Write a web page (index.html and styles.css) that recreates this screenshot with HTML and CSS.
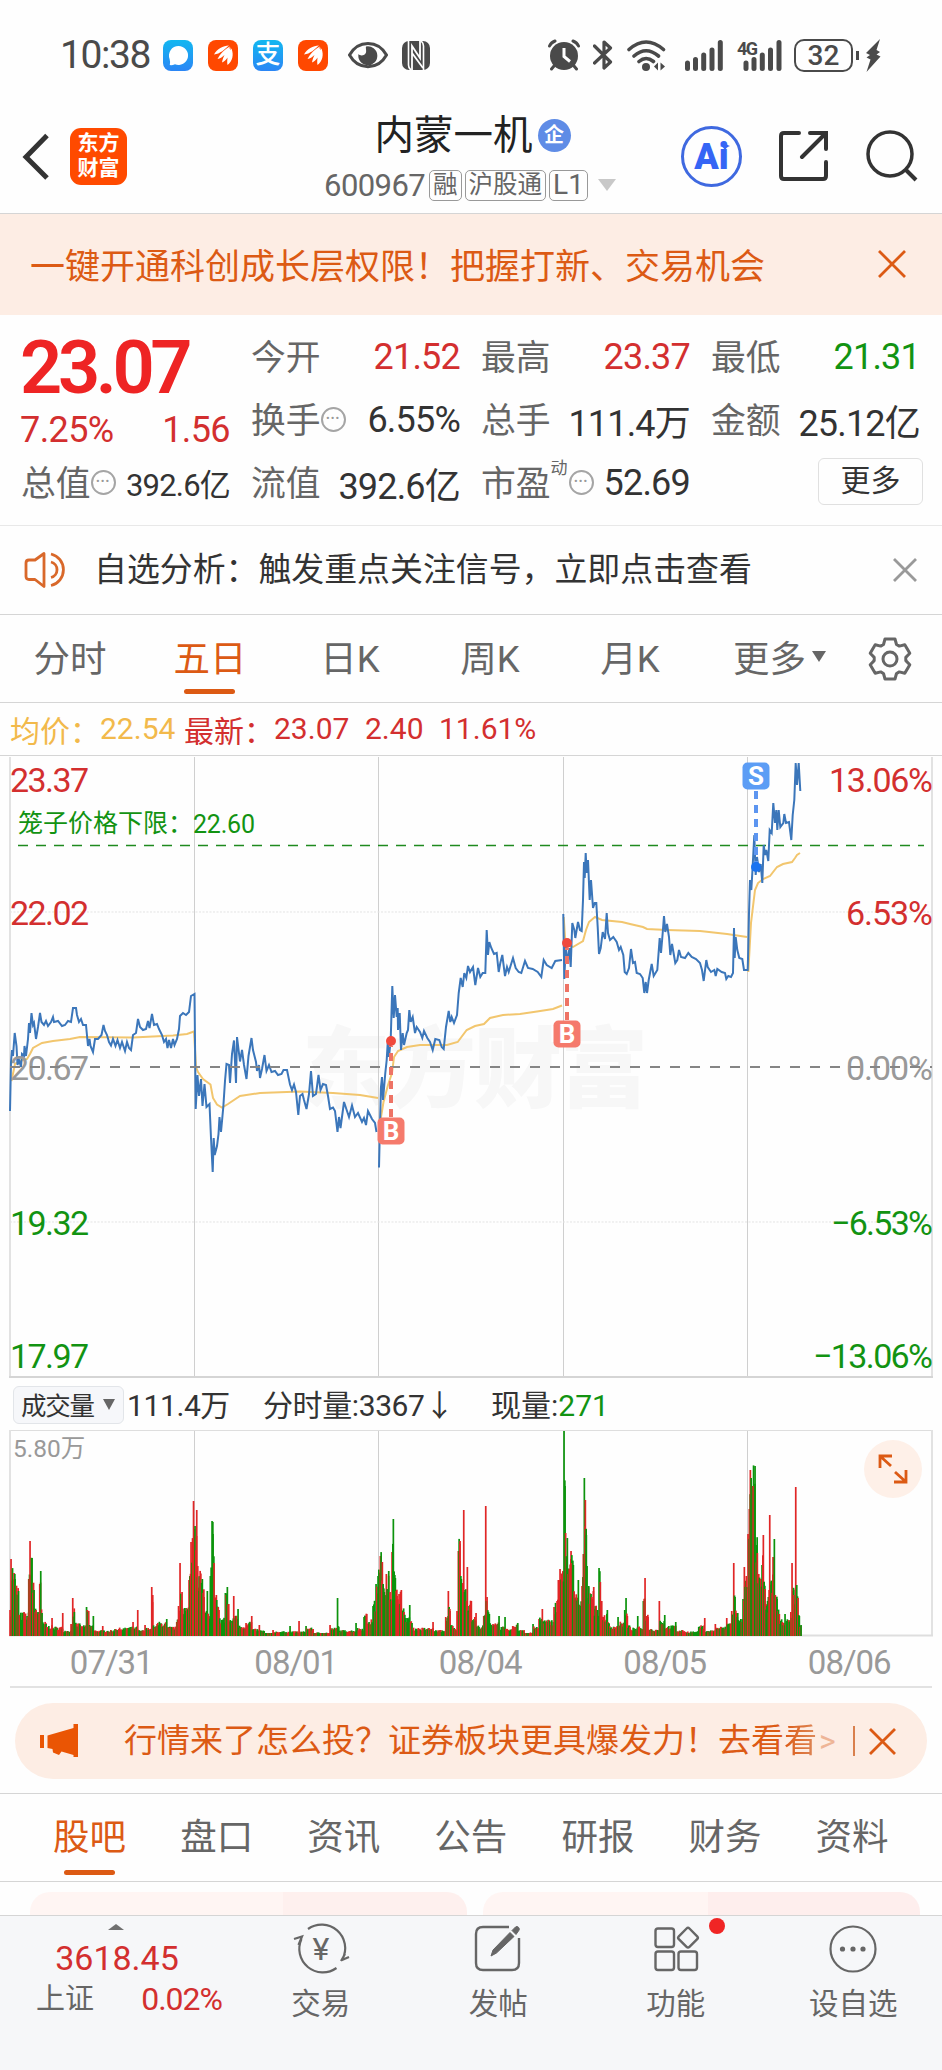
FILE: index.html
```html
<!DOCTYPE html>
<html lang="zh-CN">
<head>
    <meta charset="UTF-8">
    <meta name="viewport" content="width=device-width, initial-scale=1.0">
    <title>内蒙一机 600967</title>
    <link rel="stylesheet" href="styles.css">
</head>
<body>
    <div class="status-bar">
        <span class="time">10:38</span>
        <svg class="app-icon" width="30" height="31" viewBox="0 0 30 31">
            <defs>
                <linearGradient id="blue" x1="0" y1="0" x2="0" y2="1">
                    <stop offset="0" stop-color="#12b7f0"/>
                    <stop offset="1" stop-color="#2b86f5"/>
                </linearGradient>
            </defs>
            <rect width="30" height="31" rx="8" fill="url(#blue)"/>
            <path d="M15.500 6a9.500 9.500 0 1 1-3.500 18.300Q9 25.500 6.800 25Q7.500 22 6.600 19A9.500 9.500 0 0 1 15.500 6z" fill="#fff"/>
        </svg>
        <svg class="app-icon" width="30" height="31" viewBox="0 0 30 31">
            <rect width="30" height="31" rx="8" fill="#ff4800"/>
            <path d="M6 14.500C9 9 15 5.500 21 5.500C17 9 12 14 6 14.500zM9.500 19C12 14 17 9 22 6.500C20 12 15 18 9.500 19zM14 22.500C15 17 18 11 22.500 7.500C22.500 14 19.500 20 14 22.500zM19.500 25C18.500 19 20.500 12 23.500 8.500C26 15 24.500 21 19.500 25z" fill="#fff"/>
        </svg>
        <div class="app-icon pay">支</div>
        <svg class="app-icon" width="30" height="31" viewBox="0 0 30 31">
            <rect width="30" height="31" rx="8" fill="#ff4800"/>
            <path d="M6 14.500C9 9 15 5.500 21 5.500C17 9 12 14 6 14.500zM9.500 19C12 14 17 9 22 6.500C20 12 15 18 9.500 19zM14 22.500C15 17 18 11 22.500 7.500C22.500 14 19.500 20 14 22.500zM19.500 25C18.500 19 20.500 12 23.500 8.500C26 15 24.500 21 19.500 25z" fill="#fff"/>
        </svg>
        <svg class="eye" width="40" height="28" viewBox="0 0 40 28">
            <path d="M1.500 14C10 -1.500 30 -1.500 38.500 14C30 29.500 10 29.500 1.500 14z" fill="none" stroke="#4a4a4a" stroke-width="3"/>
            <path d="M18 5.500A9.500 9.500 0 1 1 10.500 13c2 2.500 6.500 1.500 7.500-1.500c.600-2-.600-4.500 0-6z" fill="#4a4a4a"/>
        </svg>
        <svg class="nfc" width="28" height="29" viewBox="0 0 28 29">
            <rect width="28" height="29" rx="7" fill="#4a4a4a"/>
            <path d="M6.500 0V24Q6.500 27 9 29M21.500 29V5Q21.500 2 19 0" fill="none" stroke="#fff" stroke-width="1.600"/>
            <path d="M10 29V5L18 17V0M10 12L21 27" fill="none" stroke="#fff" stroke-width="1.800"/>
        </svg>
        <svg class="alarm" width="32" height="32" viewBox="0 0 32 32">
            <circle cx="16" cy="17" r="14" fill="#4a4a4a"/>
            <path d="M1.500 7Q3 3.500 7 2M25 2Q29 3.500 30.500 7M6 27L3.500 30M26 27L28.500 30" fill="none" stroke="#4a4a4a" stroke-width="3" stroke-linecap="round"/>
            <path d="M16 9V17.500L22 22.500" fill="none" stroke="#fff" stroke-width="3"/>
        </svg>
        <svg class="bluetooth" width="20" height="32" viewBox="0 0 20 32">
            <path d="M1.500 7L17.500 23L11 29V3L17.500 9L1.500 24" fill="none" stroke="#4a4a4a" stroke-width="3.200" stroke-linecap="round" stroke-linejoin="round"/>
        </svg>
        <svg class="wifi" width="40" height="31" viewBox="0 0 40 31">
            <path d="M2 9.500Q19 -5.500 36.500 9.500M7 16Q19 5.500 31.500 16M12 21.500Q19 15.500 26.500 21.500" fill="none" stroke="#4a4a4a" stroke-width="3.600" stroke-linecap="round"/>
            <circle cx="19" cy="27" r="4" fill="#4a4a4a"/>
            <path d="M27 26.500L31 22.500V30.500zM38 26.500L33.500 22.500V30.500z" fill="#4a4a4a"/>
        </svg>
        <svg class="signal" width="40" height="31" viewBox="0 0 40 31">
            <path d="M2.500 23V28.500M10.500 19.500V28.500M18.700 15V28.500M27 10V28.500M35.300 2.500V28.500" stroke="#4a4a4a" stroke-width="5" stroke-linecap="round"/>
        </svg>
        <svg class="signal-4g" width="45" height="31" viewBox="0 0 45 31">
            <text x="0" y="15" font-size="18" font-weight="700" textLength="21" fill="#4a4a4a">4G</text>
            <path d="M9 23V28.500M17 19.500V28.500M25.300 15V28.500M33.500 10V28.500M42 2.500V28.500" stroke="#4a4a4a" stroke-width="5" stroke-linecap="round"/>
        </svg>
        <div class="battery">32</div>
        <svg width="25" height="33" viewBox="0 0 25 33">
            <path d="M1.500 12V21" stroke="#4a4a4a" stroke-width="3"/>
            <path d="M24 0L10 14L14 16L10.500 18.500L14.500 20.500L10.500 33L24.500 17.500L20.500 15.500L24 13L20.500 11z" fill="#4a4a4a"/>
        </svg>
    </div>

    <div class="header">
        <div class="header-left">
            <svg width="28" height="48" viewBox="0 0 28 48">
                <path d="M25 2.500L4 24L25 45" fill="none" stroke="#333" stroke-width="5"/>
            </svg>
            <div class="logo">东方<br>财富</div>
        </div>
        <div class="header-title">
            <div class="stock-name"><span class="name">内蒙一机</span><span class="qi">企</span></div>
            <div class="stock-code">
                <span class="code">600967</span>
                <span class="tag">融</span>
                <span class="tag">沪股通</span>
                <span class="tag l1">L1</span>
                <i class="caret"></i>
            </div>
        </div>
        <div class="header-right">
            <div class="ai">Ai<svg width="10" height="10" viewBox="0 0 10 10"><path d="M5 0Q6 4 10 5Q6 6 5 10Q4 6 0 5Q4 4 5 0z" fill="#3565f5"/></svg></div>
            <svg class="share" width="50" height="50" viewBox="0 0 50 50">
                <path d="M20 2H5Q2 2 2 5V45Q2 48 5 48H44Q47 48 47 45V31M31 2H47V18M47 2L23 26" fill="none" stroke="#333" stroke-width="4" stroke-linecap="round"/>
            </svg>
            <svg width="52" height="52" viewBox="0 0 52 52">
                <circle cx="24" cy="24" r="22" fill="none" stroke="#333" stroke-width="3.500"/>
                <path d="M39 39L50 50" stroke="#333" stroke-width="4"/>
            </svg>
        </div>
    </div>

    <div class="banner">
        <span>一键开通科创成长层权限！把握打新、交易机会</span>
        <svg width="28" height="28" viewBox="0 0 28 28"><path d="M1 1L27 27M27 1L1 27" stroke="#dc5a14" stroke-width="2.800"/></svg>
    </div>

    <div class="quote">
        <div class="quote-main">
            <div class="price">23.07</div>
            <div class="change"><span>7.25%</span><span>1.56</span></div>
            <div class="cell small"><label>总值</label><i class="dots">•••</i><b>392.6亿</b></div>
        </div>
        <div class="quote-grid">
            <div class="cell"><label>今开</label><b class="up">21.52</b></div>
            <div class="cell"><label>最高</label><b class="up">23.37</b></div>
            <div class="cell"><label>最低</label><b class="down">21.31</b></div>
            <div class="cell"><label>换手</label><i class="dots">•••</i><b>6.55%</b></div>
            <div class="cell"><label>总手</label><b>111.4万</b></div>
            <div class="cell"><label>金额</label><b>25.12亿</b></div>
            <div class="cell"><label>流值</label><b>392.6亿</b></div>
            <div class="cell"><label>市盈</label><sup>动</sup><i class="dots">•••</i><b>52.69</b></div>
            <div class="cell"><button class="more-btn">更多</button></div>
        </div>
    </div>

    <div class="notice">
        <svg width="44" height="36" viewBox="0 0 44 36">
            <path d="M20 1.500V34.500L11 27.500H5Q2 27.500 2 24.500V11Q2 8 5 8H11z" fill="none" stroke="#d9682a" stroke-width="2.800" stroke-linejoin="round"/>
            <path d="M27 2A16.200 16.200 0 0 1 27 33.500M27 10A8 8 0 0 1 27 25.500" fill="none" stroke="#d9682a" stroke-width="2.800"/>
        </svg>
        <span>自选分析：触发重点关注信号，立即点击查看</span>
        <svg class="close" width="24" height="24" viewBox="0 0 24 24"><path d="M1 1L23 23M23 1L1 23" stroke="#999" stroke-width="2.800"/></svg>
    </div>

    <div class="period-tabs">
        <span>分时</span>
        <span class="active">五日</span>
        <span>日K</span>
        <span>周K</span>
        <span>月K</span>
        <span class="more">更多<i></i></span>
        <svg width="46" height="46" viewBox="-23 -23 46 46">
            <path d="M-6.500 -14.500L-5 -20H5L6.500 -14.500L9.300 -12.900L14.800 -14.300L19.800 -5.700L15.800 -1.600V1.600L19.800 5.700L14.800 14.300L9.300 12.900L6.500 14.500L5 20H-5L-6.500 14.500L-9.300 12.900L-14.800 14.300L-19.800 5.700L-15.800 1.600V-1.600L-19.800 -5.700L-14.800 -14.300L-9.300 -12.900z" fill="none" stroke="#666" stroke-width="3" stroke-linejoin="round"/>
            <circle r="7" fill="none" stroke="#666" stroke-width="3"/>
        </svg>
    </div>

    <div class="avg-row">
        <span class="avg">均价：</span><span class="avg n1">22.54</span>
        <span>最新：</span><span class="n2">23.07</span><span class="n3">2.40</span><span>11.61%</span>
    </div>

    <svg class="price-chart" width="942" height="624" viewBox="0 755 942 624">
        <text class="watermark" x="302" y="1100" textLength="346">东方财富</text>
        <g class="grid-lines">
            <path d="M0 755.500H942" stroke="#d5d5d5"/>
            <path d="M10 757V1378M932 757V1378" stroke="#e2e2e2" stroke-width="2"/>
            <path d="M194.500 757V1377M378.500 757V1377M563.500 757V1377M747.500 757V1377" stroke="#cfcfcf"/>
            <path d="M9 1377H933" stroke="#d5d5d5" stroke-width="2"/>
            <path d="M10 912H932M10 1222H932" stroke="#e3e3e3" stroke-dasharray="2 1.500"/>
        </g>
        <path d="M18 845.500H924" stroke="#1f8a1f" stroke-width="1.300" stroke-dasharray="10 8"/>
        <g id="lines"></g>
        <g class="axis-labels">
            <text class="up" x="10" y="792" textLength="79">23.37</text>
            <text class="up" x="10" y="925" textLength="79">22.02</text>
            <text class="flat" x="10" y="1080" textLength="79">20.67</text>
            <text class="down" x="10" y="1235" textLength="79">19.32</text>
            <text class="down" x="10" y="1368" textLength="79">17.97</text>
            <text class="up" x="829" y="792" textLength="104">13.06%</text>
            <text class="up" x="846" y="925" textLength="87">6.53%</text>
            <text class="flat" x="846" y="1080" textLength="87">0.00%</text>
            <text class="down" x="831" y="1235" textLength="102">−6.53%</text>
            <text class="down" x="813" y="1368" textLength="120">−13.06%</text>
        </g>
        <path d="M10 1067H932" stroke="#858585" stroke-width="2" stroke-dasharray="10 10"/>
        <text class="cage" x="18" y="832">笼子价格下限：</text>
        <text class="cage" x="193" y="833" textLength="62">22.60</text>
        <g stroke-width="4" stroke-dasharray="8 6">
            <path d="M391 1117V1046M567 1020V948" stroke="#ee7365"/>
            <path d="M756 791V862" stroke="#5c95f0"/>
        </g>
        <circle cx="391" cy="1041" r="5" fill="#f0483c"/>
        <circle cx="567" cy="943" r="5" fill="#f0483c"/>
        <circle cx="756" cy="867" r="5" fill="#1a73f0"/>
        <g class="marks">
            <rect x="377.500" y="1117.500" width="27" height="27" rx="5" fill="#f57a6c"/>
            <text x="391" y="1140">B</text>
            <rect x="553.500" y="1020.500" width="27" height="27" rx="5" fill="#f57a6c"/>
            <text x="567" y="1043">B</text>
            <rect x="742.500" y="762.500" width="27" height="27" rx="5" fill="#5c9df5"/>
            <text x="756" y="785">S</text>
        </g>
    </svg>

    <div class="volume-row">
        <div class="select">成交量<i></i></div>
        <span class="total">111.4万</span>
        <span class="minute">分时量:3367↓</span>
        <span class="current">现量:<em>271</em></span>
    </div>

    <div class="volume">
        <svg width="942" height="208" viewBox="0 1430 942 208">
            <path d="M9 1430.500H933" stroke="#dedede"/>
            <path d="M10 1430V1636M932 1430V1636" stroke="#e2e2e2" stroke-width="2"/>
            <path d="M194.500 1431V1636M378.500 1431V1636M563.500 1431V1636M747.500 1431V1636" stroke="#cfcfcf"/>
            <path d="M9 1635.500H933" stroke="#dedede" stroke-width="2"/>
            <text class="vol-max" x="13" y="1457">5.80万</text>
            <g id="bars"></g>
        </svg>
        <div class="expand">
            <svg width="30" height="30" viewBox="0 0 30 30">
                <path d="M2 14V2H14M2 2L13 12M28 16V28H16M28 28L17 18" fill="none" stroke="#dc5a14" stroke-width="2.800"/>
            </svg>
        </div>
    </div>

    <div class="dates">
        <span>07/31</span><span>08/01</span><span>08/04</span><span>08/05</span><span>08/06</span>
    </div>

    <div class="promo">
        <svg width="40" height="34" viewBox="0 0 40 34">
            <path d="M1 11H5V24H1zM8.500 11.500L34.500 4V0H39V33H34.500V31L22.500 27.500L20 31L14 28.500L13.500 25L8.500 24z" fill="#ea5504"/>
        </svg>
        <span class="promo-text">行情来了怎么投？证券板块更具爆发力！去看<span class="fade">看</span><span class="arrow">&gt;</span></span>
        <i class="bar"></i>
        <svg width="27" height="27" viewBox="0 0 27 27"><path d="M1 1L26 26M26 1L1 26" stroke="#dc5a14" stroke-width="2.800"/></svg>
    </div>

    <div class="info-tabs">
        <span class="active">股吧</span>
        <span>盘口</span>
        <span>资讯</span>
        <span>公告</span>
        <span>研报</span>
        <span>财务</span>
        <span>资料</span>
    </div>

    <div class="cards">
        <div class="card"></div>
        <div class="card right"></div>
    </div>

    <div class="bottom-bar">
        <div class="index">
            <i class="tri"></i>
            <div class="index-value">3618.45</div>
            <div class="index-row"><span>上证</span><em>0.02%</em></div>
        </div>
        <div class="nav-item">
            <svg width="58" height="52" viewBox="0 0 58 52">
                <path d="M16 6A23.500 23.500 0 0 1 50.500 36M44.500 45A23.500 23.500 0 0 1 9.500 16M2 16L10 13.500L6.500 22M49 38L53 31M50 37L57 34" fill="none" stroke="#666" stroke-width="2.200"/>
                <text x="29" y="37" font-size="32" text-anchor="middle" fill="#666">¥</text>
            </svg>
            <span>交易</span>
        </div>
        <div class="nav-item">
            <svg width="50" height="52" viewBox="0 0 50 52">
                <path d="M36 4H10Q3 4 3 11V40Q3 47 10 47H39Q46 47 46 40V15" fill="none" stroke="#666" stroke-width="2.400"/>
                <path d="M18 33L20 27L37 9.500L41 13.500L23.500 30zM39 7.500L42.500 4Q44 2.800 45.500 4.300Q47 6 45.800 7.500L43 11.500z" fill="#666" stroke="#666"/>
            </svg>
            <span>发帖</span>
        </div>
        <div class="nav-item">
            <svg width="50" height="52" viewBox="0 0 50 52">
                <g fill="none" stroke="#666" stroke-width="2.400">
                    <rect x="4.500" y="5.500" width="18.500" height="18.500" rx="2.500"/>
                    <rect x="4.500" y="28.500" width="18.500" height="18.500" rx="2.500"/>
                    <rect x="27.500" y="28.500" width="18.500" height="18.500" rx="2.500"/>
                    <rect x="29.500" y="7.200" width="15" height="15" rx="2" transform="rotate(45 37 14.700)"/>
                </g>
            </svg>
            <span>功能</span>
            <i class="red-dot"></i>
        </div>
        <div class="nav-item">
            <svg width="50" height="52" viewBox="0 0 50 52">
                <circle cx="25" cy="26" r="22.500" fill="none" stroke="#666" stroke-width="2.200"/>
                <g fill="#666"><circle cx="14.500" cy="26" r="2.600"/><circle cx="25" cy="26" r="2.600"/><circle cx="35" cy="26" r="2.600"/></g>
            </svg>
            <span>设自选</span>
        </div>
    </div>

    <script src="chart.js"></script>
</body>
</html>
```

FILE: styles.css
```css
* {
    box-sizing: border-box;
}

body {
    margin: 0;
    width: 942px;
    height: 2070px;
    overflow: hidden;
    background-color: #fefefe;
    font-family: Roboto, "Noto Sans CJK SC", sans-serif;
    color: #333;
}

svg {
    display: block;
    flex-shrink: 0;
}

i, em, b {
    font-style: normal;
    font-weight: 400;
}

.up { color: #d32f2f; fill: #d32f2f; }
.down { color: #129312; fill: #129312; }
.flat { fill: #999; }

/* status bar */
.status-bar {
    display: flex;
    align-items: center;
    height: 94px;
    padding: 16px 0 0 60px;
}

.time {
    width: 103px;
    font-size: 39px;
    letter-spacing: -1.4px;
    color: #4a4a4a;
}

.app-icon {
    margin-right: 15px;
}

.pay {
    width: 30px;
    height: 31px;
    border-radius: 8px;
    background: linear-gradient(#12b7f0, #2b86f5);
    color: #fff;
    font-size: 25px;
    font-weight: 500;
    line-height: 30px;
    text-align: center;
}

.eye { margin-left: 5px; }
.nfc { margin-left: 14px; }
.alarm { margin-left: 118px; }
.bluetooth { margin-left: 13px; }
.wifi { margin-left: 14px; }
.signal { margin-left: 18px; }

.signal-4g {
    margin-left: 12px;
    overflow: visible;
}

.battery {
    width: 59px;
    height: 33px;
    margin: 0 3px 0 12px;
    border: 2.5px solid #4a4a4a;
    border-radius: 10px;
    font-size: 28px;
    font-weight: 500;
    line-height: 29px;
    text-align: center;
    color: #4a4a4a;
}

/* header */
.header {
    display: grid;
    grid-template-columns: 300px 340px 302px;
    height: 120px;
    border-bottom: 1px solid #d5d5d5;
}

.header-left {
    display: flex;
    align-items: center;
    padding: 6px 0 0 22px;
}

.logo {
    width: 57px;
    height: 57px;
    margin-left: 20px;
    padding-top: 3px;
    border-radius: 11px;
    background-color: #ff4a00;
    color: #fff;
    font-size: 21px;
    font-weight: 700;
    line-height: 25px;
    text-align: center;
}

.header-title {
    display: flex;
    flex-direction: column;
    align-items: center;
    padding-top: 16px;
}

.stock-name {
    display: flex;
    align-items: center;
    height: 50px;
    padding-left: 5px;
    font-size: 39.5px;
    color: #222;
}

.name { padding-bottom: 7px; }

.qi {
    width: 33px;
    height: 33px;
    margin-left: 5px;
    border-radius: 50%;
    background-color: #5f8ce6;
    color: #fff;
    font-size: 20px;
    font-weight: 700;
    line-height: 32px;
    text-align: center;
}

.stock-code {
    display: flex;
    align-items: center;
    height: 50px;
    font-size: 31px;
    color: #666;
}

.code {
    margin-right: 4px;
    letter-spacing: -0.6px;
}

.tag {
    height: 31px;
    margin-right: 3px;
    padding: 0 3px;
    border: 1.5px solid #999;
    border-radius: 5px;
    font-size: 24.5px;
    line-height: 27px;
}

.l1 {
    font-size: 28px;
    line-height: 28px;
}

.caret {
    margin-left: 7px;
    border: 9px solid transparent;
    border-top: 12px solid #c8c8c8;
    border-bottom: 0;
}

.header-right {
    display: flex;
    align-items: center;
    padding: 5px 0 0 41px;
}

.ai {
    position: relative;
    width: 61px;
    height: 61px;
    border: 3px solid #3f69e0;
    border-radius: 50%;
    color: #3565f5;
    font-size: 36px;
    font-weight: 900;
    line-height: 56px;
    text-align: center;
}

/* sparkle over the dot of the i */
.ai svg {
    position: absolute;
    top: 12px;
    right: 9px;
}

.share { margin: 0 37px 0 37px; }

/* orange banner */
.banner {
    display: flex;
    align-items: center;
    justify-content: space-between;
    height: 101px;
    padding: 0 36px 2px 30px;
    background-color: #fdede4;
    color: #dc5a14;
    font-size: 35px;
}

/* quote panel */
.quote {
    display: flex;
    gap: 22px;
    height: 211px;
    padding: 10px 22px 0;
    border-bottom: 1px solid #e8e8e8;
}

.quote-main {
    width: 208px;
}

.price {
    height: 83px;
    margin-left: -2px;
    font-size: 74px;
    font-weight: 600;
    line-height: 86px;
    letter-spacing: -4.4px;
    color: #ee2424;
}

.change {
    display: flex;
    justify-content: space-between;
    height: 43px;
    margin-left: -2px;
    font-size: 36px;
    line-height: 45px;
    letter-spacing: -0.6px;
    color: #d32f2f;
}

.quote-grid {
    display: grid;
    grid-template-columns: repeat(3, 208px);
    grid-auto-rows: 63px;
    column-gap: 22px;
}

.cell {
    display: flex;
    align-items: center;
    height: 63px;
    white-space: nowrap;
}

.cell label {
    margin-left: -1px;
    padding-bottom: 3px;
    font-size: 34.8px;
    color: #666;
}

.cell b {
    margin-left: auto;
    font-size: 36px;
    letter-spacing: -0.8px;
}

.small b {
    font-size: 31px;
}

.cell sup {
    align-self: flex-start;
    margin: 3px 1px 0 0;
    font-size: 17px;
    color: #666;
}

.dots {
    width: 25px;
    height: 25px;
    border: 2px solid #a5a5a5;
    border-radius: 50%;
    font-size: 11px;
    line-height: 20px;
    letter-spacing: 1px;
    text-align: center;
    color: #999;
}

.more-btn {
    width: 105px;
    height: 47px;
    margin: -3px -3px 0 auto;
    padding: 0;
    border: 1.5px solid #e0e0e0;
    border-radius: 6px;
    background-color: #fefefe;
    font-family: inherit;
    font-size: 30px;
    line-height: 40px;
    color: #333;
}

/* notice */
.notice {
    display: flex;
    align-items: center;
    height: 89px;
    padding: 0 25px 0 24px;
    border-bottom: 1px solid #d5d5d5;
    font-size: 32.9px;
}

.notice span {
    margin-left: 26px;
    padding-bottom: 7px;
}

.close { margin-left: auto; }

/* chart period tabs */
.period-tabs {
    display: flex;
    align-items: center;
    height: 88px;
    border-bottom: 1px solid #d5d5d5;
    font-size: 36.5px;
    color: #666;
}

.period-tabs span {
    width: 140px;
    padding-bottom: 4px;
    text-align: center;
}

.period-tabs .more {
    display: flex;
    align-items: center;
    justify-content: center;
    width: 167px;
    padding-right: 8px;
}

.more i {
    margin-left: 6px;
    border: 7px solid transparent;
    border-top: 11px solid #666;
    border-bottom: 0;
}

.active {
    position: relative;
    color: #dc5a14;
}

.active::after {
    content: "";
    position: absolute;
    left: 50%;
    bottom: -7px;
    width: 51px;
    height: 5px;
    margin-left: -26px;
    border-radius: 3px;
    background-color: #dc5a14;
}

.avg-row {
    display: flex;
    align-items: center;
    height: 52px;
    padding: 0 0 1px 10px;
    font-size: 30px;
    color: #d32f2f;
}

.avg { color: #f2b94b; }
.n1 { width: 84px; }
.n2 { width: 91px; }
.n3 { width: 74px; }

/* price chart */
.axis-labels { font-size: 34px; }

.watermark {
    font-family: "Noto Sans CJK SC", sans-serif;
    font-size: 88px;
    font-weight: 900;
    fill: #f7f7f7;
}

.cage {
    font-size: 25px;
    fill: #129312;
}

.marks text {
    font-size: 26px;
    font-weight: 700;
    text-anchor: middle;
    fill: #fff;
}

.price-line {
    fill: none;
    stroke: #3b76ba;
    stroke-width: 2;
}

.avg-line {
    fill: none;
    stroke: #f2c66e;
    stroke-width: 2;
}

/* volume */
.volume-row {
    display: flex;
    align-items: center;
    height: 51px;
    padding-left: 13px;
    font-size: 30px;
    white-space: nowrap;
}

.volume-row span { padding-bottom: 4px; }
.volume-row em { color: #129312; }

.select {
    display: flex;
    align-items: center;
    width: 111px;
    height: 38px;
    padding: 0 0 3px 7px;
    border: 1px solid #e2e5e9;
    border-radius: 6px;
    background-color: #f6f7fa;
    font-size: 25.5px;
    letter-spacing: -1.3px;
}

.select i {
    margin: 3px 0 0 9px;
    border: 6.5px solid transparent;
    border-top: 11px solid #666;
    border-bottom: 0;
}

.total {
    width: 139px;
    padding-left: 3px;
    letter-spacing: -0.4px;
}

.minute {
    width: 228px;
    letter-spacing: -0.4px;
}

.volume { position: relative; }

.vol-max {
    font-size: 24.5px;
    fill: #999;
}

/* floats over the volume chart */
.expand {
    position: absolute;
    top: 10px;
    right: 20px;
    display: flex;
    align-items: center;
    justify-content: center;
    width: 58px;
    height: 58px;
    border-radius: 50%;
    background-color: #fef0e8;
}

.dates {
    display: grid;
    grid-template-columns: repeat(5, 184.5px);
    height: 50px;
    margin: 0 10px;
    padding-left: 9px;
    border-bottom: 2px solid #e2e2e2;
    font-size: 33px;
    line-height: 50px;
    letter-spacing: -1px;
    text-align: center;
    color: #999;
}

/* promo */
.promo {
    display: flex;
    align-items: center;
    height: 76px;
    margin: 15px 15px 14px;
    padding-left: 24px;
    border-radius: 38px;
    background-color: #fdede4;
    color: #dc5a14;
}

.promo-text {
    width: 729px;
    margin-left: 45px;
    padding-bottom: 7px;
    font-size: 33px;
    white-space: nowrap;
}

.fade {
    background: linear-gradient(90deg, #dc5a14, #dd8a5c);
    background-clip: text;
    -webkit-background-clip: text;
    color: transparent;
}

.arrow {
    margin-left: 2px;
    font-size: 32px;
    color: #eeb597;
}

.bar {
    width: 1.5px;
    height: 30px;
    margin-right: 14px;
    background-color: #d9804d;
}

.info-tabs {
    display: grid;
    grid-template-columns: repeat(7, 127.1px);
    height: 89px;
    padding-left: 26px;
    border-top: 1px solid #d5d5d5;
    border-bottom: 1px solid #d5d5d5;
    font-size: 36.5px;
    line-height: 88px;
    text-align: center;
    color: #666;
}

.info-tabs .active { color: #dc5a14; }
.info-tabs .active::after { bottom: 7px; }

.cards {
    display: flex;
    gap: 16px;
    height: 33px;
    padding: 10px 22px 0 30px;
    overflow: hidden;
}

.card {
    width: 437px;
    height: 60px;
    border-radius: 20px;
    background: linear-gradient(90deg, #fff5f3 58%, #fef0ee 58%);
}

.card.right {
    background: linear-gradient(90deg, #fff5f3 51.5%, #feeeed 51.5%);
}

/* bottom bar */
.bottom-bar {
    display: grid;
    grid-template-columns: 232px repeat(4, 177.5px);
    height: 155px;
    border-top: 1px solid #d5d5d5;
    background-color: #f6f7f9;
    color: #666;
}

.index {
    display: flex;
    flex-direction: column;
    align-items: center;
    padding-top: 8px;
}

.tri {
    border: 8px solid transparent;
    border-top: 0;
    border-bottom: 6px solid #707070;
}

.index-value {
    height: 47px;
    padding-left: 2px;
    font-size: 34px;
    line-height: 56px;
    color: #d32f2f;
}

.index-row {
    display: flex;
    justify-content: space-between;
    width: 186px;
    margin-left: 26px;
    font-size: 29px;
    line-height: 44px;
}

.index-row em {
    font-size: 32px;
    letter-spacing: -1px;
    color: #d32f2f;
}

.nav-item {
    position: relative;
    display: flex;
    flex-direction: column;
    align-items: center;
    padding-top: 7px;
    font-size: 29.5px;
    line-height: 58px;
}

.red-dot {
    position: absolute;
    top: 2px;
    right: 40px;
    width: 16px;
    height: 16px;
    border-radius: 50%;
    background-color: #f02525;
}
```

FILE: chart.js
```js
// price of each trading day, "x,y" pairs
const prices = [
    "10,1111 11,1062 12,1050 13,1056 14.7,1033 16.5,1046 17.5,1065 19,1060 21,1067 22,1054 24,1056 24.5,1046 26,1056 28,1039 29,1023 30,1033 31.5,1013 33,1025 34,1023 36,1039 38,1027 40,1013 41.5,1022 44,1025 46,1021 48,1026 51,1022 53,1017 54,1022 58,1021 62,1026 65,1025 68,1021 71,1022 73,1008 76,1008 77,1015 79,1022 81,1019 83,1025 86,1025 88,1046 89.5,1039 90.5,1046 93,1052 95,1039 98,1039 101.5,1035 103.5,1025 105,1031 107,1035 109,1042 111,1045.5 113,1039 115.5,1046 117.5,1040 120,1048 122,1042 125,1051 127,1042 129,1048 131,1050 133,1035 136,1033 138,1019 140,1027 143,1030 146,1029 148,1021 149.5,1028 152,1014 154,1025 157,1024 159,1029 162,1035 164,1042 166,1039 167.5,1048 169,1040 171,1048 173,1039 174.5,1045 177,1039 179,1029 180,1016 183,1013 186,1015 189,1012 191,996 194.5,994 194.7,1012 195.7,1109 197.5,1075 199,1096 201,1079 202.5,1106 204.5,1084 206.5,1107 209.5,1104 211,1138 212.7,1172 213.7,1138 214.7,1155 217,1146 218.5,1134 219.5,1117 221,1132 223.3,1107 225,1081 226.5,1064 229,1065 230,1083 232,1054 234,1040.5 236,1083 237,1037 240,1061.5 242,1050 244,1065 246.5,1079 248.5,1056 251.5,1038 253,1050 256,1062 257,1071 259,1065 260,1078 262,1069 264.5,1055 266.5,1071 269,1065 271.5,1072 275,1071 278,1075 281.5,1074 283.5,1070 287,1070 290,1084.5 292,1090 294,1084.5 296,1092 298.3,1115 300,1096 302.5,1094 304,1100 306.5,1109 309,1094 311,1071 313,1096 316,1094 318.5,1075 320.5,1090 323,1084 326,1085 328,1096 330,1109 333,1107.5 335,1111 337.5,1132 339,1117 340.5,1128 344,1102 347,1111 349,1117 352,1105.5 355,1117 358,1113 362,1122 364,1118 366,1125 368,1111 372,1119 375,1123 376.5,1132",
    "379,1167.5 380,1123 381,1087 382,1077 383,1100 385.3,1073 386.7,1060 387.7,1043 389,1057 390.7,1040 392.3,986 393.7,1018 395,995 396.7,1017 397.7,1008 398,1030 399.7,1013 401,1050 402.7,1033 404,1045 406.7,1033 408,1030 409.3,1010 410.7,1022 412.7,1017 415,1033 416.7,1027 420,1032 422.3,1038 424,1031 427.3,1038 430,1042 432.7,1050 435.3,1039 439.3,1040 441.7,1047 443.7,1049 446,1027 448.7,1011 450.3,1022 451.7,1017 454,1023 457,1015 458.7,993 460.7,978 462.7,987 464.3,973 466.3,978 468,966 470,972 473,967 475.3,985 478,968 480.3,977 482.7,973 485.3,973 486.7,930 488,955 489.3,942 491.3,948 494,954 496.7,953 498.7,972 500.3,963 502.3,955 505,976 507,967 508.7,972 513,958 515.7,968 518.7,972 521.3,973 525,961 528,968 532.7,969 537.7,972 541.3,977 543.7,960 546.7,965 551.7,968 555.3,961 562,960",
    "563.3,914 564.3,979 565.7,947 567.7,963 569.3,948 570.7,967 572.3,923 574.3,930 575.3,938 578,922 580,930 581.7,931 583,900 584,862 584.7,878 585.7,853 586.7,873 588,860 589.7,900 591,880 593,908 594.7,903 596.3,903 597.7,927 599,954 600.7,948 602.7,932 605,939 606.7,913 608,933 610,940 613.3,937 616.7,942 619,950 620.7,947 623.3,955 624.7,972 626.7,974 629,968 631,949 633,963 635,962 636.7,973 640,974 642.7,978 644.3,993 645.7,982 647,993 648.7,980 651.7,964 653.7,976 657.3,970 659.7,938 661,953 662.7,933 664,916 665.3,932 667,924 669,937 670.3,955 672,944 675.3,963 677.3,960 679,950 681,957 685,958 688.3,953 691.7,957 696,959 700,963 702,970 703.7,981 706.3,960 707.7,967 711,972 714.3,970 715.7,976 717.3,969 721.7,972 725,973 726.3,979 728.3,976 731,977 733,973 734,928 734.7,958 735.7,937 737.3,950 739.3,958 742.3,959 744,970 747.7,970 748.3,947 749,913 750,880 751.3,890 752.3,873 754.3,835 755.7,875 757,857 759,872 760.7,864 762.3,883 763.7,845 765,855 766.3,850 768.3,861 769.7,830 771.7,833 773.3,803 775,823 776.3,810 777.3,830 778.7,810 780.3,827 783.3,823 784.3,814 786,823 789,822 791.3,840 792.7,815 794.3,800 795.7,763 797,785 798.7,763 800.3,791"
];

const averages = [
    "11.5,1081 15,1064 20,1061 27,1059 30,1054 33,1048 42,1043 53,1041 70,1039 80,1037 133,1037.5 173,1035.5 187,1034 194,1031.5 196,1067 198,1072 203,1079 210.5,1084.5 213,1098 217,1104.5 222,1107.5 228,1104 240,1096 260,1093 300,1091.5 333,1093 360,1095 378,1098",
    "380,1140 381,1117 383.5,1102 388,1085 392,1073 394,1057 398,1051 407,1047 420,1045 447,1045 457.7,1042 466.7,1030 475,1026 484,1024 490,1018 503,1015 520,1014 537,1011.5 553,1009 562,1005.5",
    "563.7,917 565,937 567,945 573,947 583,941 586,930 589,922 595,917 602,920 622,922 630,924 643,927 647,929 667,930 700,931 727,934 747,937",
    "748.3,972 751,923 755,890 758,883 763,879 770,876 777,867 783,864 792,862 795,858 797,855 800,853"
];

// volume bars: x, height, r(ed) or g(reen)
const volume = `10,26,r 11,77,r 14,63,r 15,57,g 18.5,45,g 20,20,r 24,24,r 27,20,g 28.7,57,r 30,95,r 32,78,g 34,46,g 36,26,r
38,24,g 39.7,52,r 40.7,65,g 42,23,g 46,12,g 48,9,r 52,18,r 57,8,g 62.7,23,r 67,5,r 71,12,r 72.7,38,r 74.3,24,g 80,11,g 85,9,g
86.5,29,g 88.7,25,r 91,10,g 93.3,20,g 97,5,r 102.7,10,r 107,5,r 115,7,g 127,8,r 133,14,r 136,8,r 137.7,26,r 140,5,g 145,11,r
150,7,r 151.7,49,r 152.7,41,r 154,9,g 157,12,r 166.7,17,g 170,8,r 176.7,14,r 178.5,30,r 180,73,r 182,44,r 184.5,28,g 187,26,r
189,56,r 191,94,r 193.5,135,r 195,110,g 196.7,126,r 197.7,70,r 199.3,60,g 202.3,57,g 204,39,r 205.7,23,g 207.3,45,g 209,20,r
210.3,60,g 212,115,g 213,102,g 214,73,r 216.7,36,g 219,26,r 221.7,16,g 225.3,43,g 227.3,49,g 228.7,32,r 231,15,g 233.7,40,r
235,20,r 238,27,g 241,9,g 246,13,r 251.7,20,r 254,6,g 259.3,11,r 264,5,g 267,2,g 273,6,r 280,4,r 286,4,g 290,10,g 293,4,g
299,15,r 302,4,g 306,10,g 313,7,r 323,3,g 330,11,r 333,7,r 337.5,38,g 338.7,9,g 350,5,r 356,13,g 360,7,r 364,19,g 366.7,22,r
369,14,g 373,30,g 376,52,g 378,60,g 380.3,80,r 382.3,74,r 384.3,44,g 386.3,62,r 388.7,65,g 390,44,r 392,84,r 393.3,117,g
395.3,58,g 397,40,r 399,42,r 401.3,46,r 404,24,r 407,18,g 409.7,31,g 412,13,g 416.7,7,g 426.7,7,r 433,14,r 435,5,g 440,6,r
443,5,g 445.7,19,r 448.3,45,r 450,25,r 452.7,10,r 455,7,r 457,25,r 458.3,85,r 460,95,r 461.3,57,g 463.7,126,r 465,46,g
467.3,69,r 469,30,g 471.3,35,r 474,17,g 476,23,r 479,9,g 483.7,20,r 485.7,130,r 487,39,r 489.3,22,g 493,12,r 499,20,g 502,8,g
505,19,g 508,6,r 512.7,10,r 517.7,13,g 524,6,r 529,3,g 533,12,g 536,8,r 539,17,r 542.3,27,r 545,14,g 551,14,r 554,29,r 557,35,r
558.3,56,r 560,67,r 562,56,r 564,205,g 565,150,g 565.6,103,r 567.3,98,g 569.3,67,r 571,85,r 572,73,r 573.3,71,g 574.7,39,r
578.3,56,g 580.3,30,g 582,50,r 583.3,82,r 584.3,158,g 585.3,136,r 586.3,101,g 587,70,g 588.7,50,g 591,42,g 593.7,49,r
595.3,27,g 597.5,26,g 599,68,g 600.3,54,r 601.7,35,r 603.7,19,r 607.3,26,g 609,12,g 614,9,r 618,19,g 622,12,r 624.7,26,g
626,38,g 627.3,20,r 630,9,r 635,7,g 637.7,20,g 640,8,r 643.3,35,g 645,58,r 646.3,20,r 648,19,r 651,7,r 657.5,6,g 659.3,35,r
661,14,g 664.7,21,g 668,9,r 675.7,14,g 684,5,r 694,4,g 698.7,9,g 704.7,18,r 707,5,g 715.3,12,r 723,8,g 726.7,18,r 729,12,g
731.7,25,r 733.7,73,r 735,39,g 737.7,23,g 740,15,g 743,37,g 744.3,69,r 746.3,60,r 748,102,r 749.3,127,r 750.3,166,r
751.3,137,g 752.7,150,r 754,150,r 755,170,g 756.3,91,g 757.3,83,r 758.7,62,r 760,51,g 762,71,g 763.3,101,r 765,47,r 766.7,30,g
768.3,39,g 769.7,121,r 771.3,54,g 773,79,r 774.3,97,g 775.3,41,r 777,37,g 779.3,22,r 782.3,14,r 785,22,g 789.3,14,g
790.8,24,r 792,73,r 793.7,41,r 795.7,149,r 796.7,51,g 798,38,r 799.3,20,g 801,11,g`.trim().split(/\s+/).map(item => {
    const parts = item.split(',');
    return { x: Number(parts[0]), h: Number(parts[1]), color: parts[2] };
});

const base = 1636;
const colors = { r: '#e02626', g: '#0c930c' };

function line(points, cls) {
    return `<polyline class="${cls}" points="${points}"/>`;
}

function bar(x, h, color) {
    return `<rect x="${(x - 0.8).toFixed(1)}" y="${(base - h).toFixed(1)}" width="1.7" height="${h.toFixed(1)}" fill="${colors[color]}"/>`;
}

document.getElementById('lines').innerHTML =
    averages.map(p => line(p, 'avg-line')).join('') +
    prices.map(p => line(p, 'price-line')).join('');

let seed = 7;
function random() {
    seed = (seed * 16807) % 2147483647;
    return seed / 2147483647;
}

let html = '';
for (let i = 0; i < volume.length - 1; i++) {
    const a = volume[i];
    const b = volume[i + 1];
    const low = Math.min(a.h, b.h);
    html += bar(a.x, a.h, a.color);
    // small bars between two peaks
    for (let x = a.x + 0.77; x < b.x; x += 0.77) {
        html += bar(x, Math.max(3, low * (0.75 + random() * 0.45)), random() < 0.5 ? 'r' : 'g');
    }
}
const last = volume[volume.length - 1];
html += bar(last.x, last.h, last.color);
document.getElementById('bars').innerHTML = html;
```
